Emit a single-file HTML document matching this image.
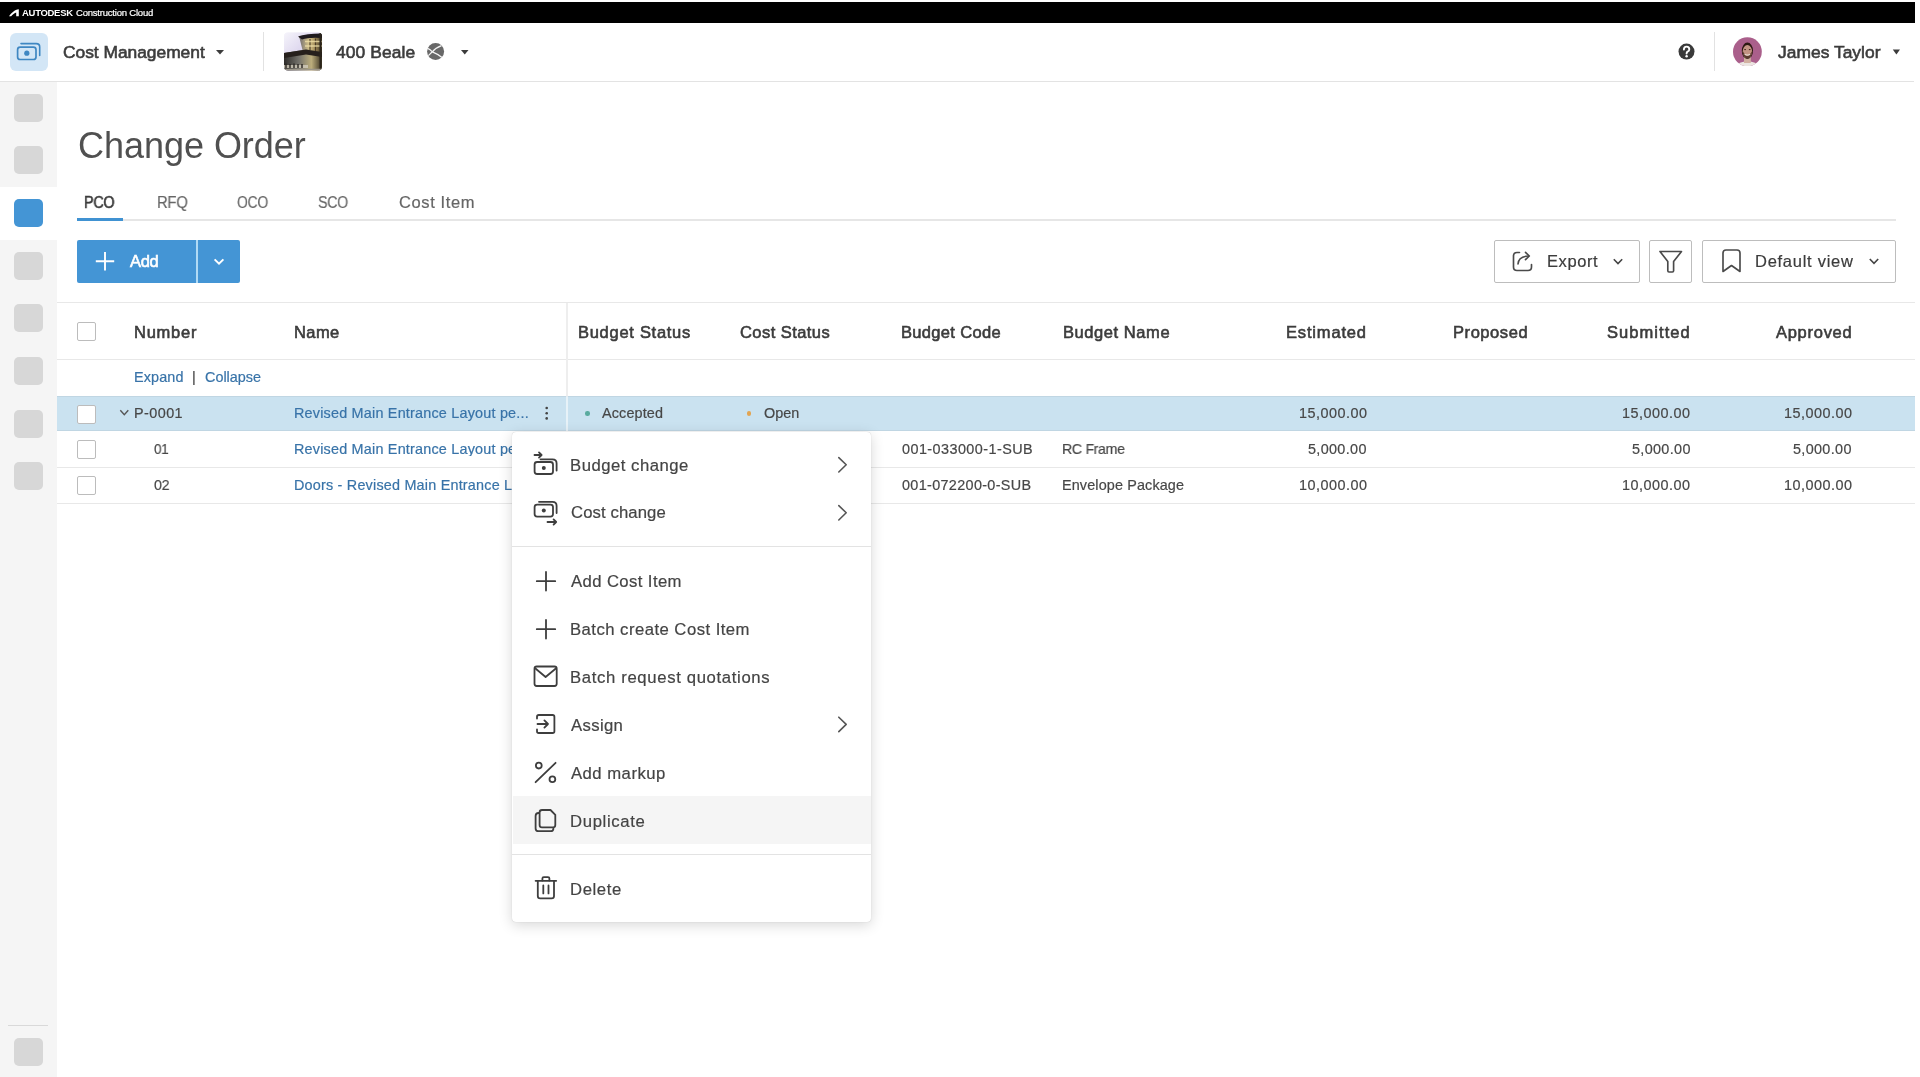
<!DOCTYPE html>
<html><head><meta charset="utf-8">
<style>
*{box-sizing:border-box;margin:0;padding:0}
html,body{width:1920px;height:1077px;overflow:hidden;background:#fff;font-family:"Liberation Sans",sans-serif;color:#3c3c3c}
.abs{position:absolute}
.t{position:absolute;white-space:nowrap;line-height:1;will-change:transform}
.sq{position:absolute;left:14px;width:29px;height:28px;border-radius:5px;background:#d7d7d7}
.btn{border:1.5px solid #bdbdbd;border-radius:2px;background:#fff}
.cb{width:19px;height:19px;border:1.5px solid #bcbcbc;border-radius:2px;background:#fff}
</style></head>
<body>

<div class="abs" style="left:0;top:2px;width:1915px;height:21px;background:#000"></div>
<svg class="abs" style="left:8px;top:8px" width="12" height="9" viewBox="0 0 12 9"><path d="M1 8.2 C3.5 5 6.5 1.6 10.8 1.2 L10.8 8.2 L8.2 8.2 L8.2 4.6 C6 5.4 4.2 7 3.2 8.2 Z" fill="#fff"/></svg>

<!-- header -->
<div class="abs" style="left:0;top:81px;width:1914px;height:1px;background:#e3e3e3"></div>
<div class="abs" style="left:10px;top:33px;width:38px;height:38px;border-radius:6px;background:#d3e6f6"></div>
<svg class="abs" style="left:0;top:0" width="60" height="80" viewBox="0 0 60 80">
  <path d="M21 43.6 H36.3 Q39.7 43.6 39.7 47 V55.5" fill="none" stroke="#3f87c2" stroke-width="1.6" stroke-linecap="round"/>
  <rect x="17.6" y="47.1" width="18.4" height="12.4" rx="2.6" fill="none" stroke="#3f87c2" stroke-width="1.7"/>
  <circle cx="26.8" cy="53.2" r="2.6" fill="#3f87c2"/>
</svg>
<svg class="abs" style="left:210px;top:45px" width="20" height="14"><path d="M6 5 H14 L10 9.5 Z" fill="#3c3c3c"/></svg>
<div class="abs" style="left:263px;top:32px;width:1px;height:39px;background:#e2e2e2"></div>
<svg class="abs" style="left:284px;top:32px" width="39" height="39" viewBox="0 0 39 39">
  <defs>
    <clipPath id="thc"><rect x="0" y="0.5" width="38" height="38" rx="4"/></clipPath>
    <linearGradient id="sky" x1="0" y1="0" x2="1" y2="1"><stop offset="0" stop-color="#f6f5fb"/><stop offset="0.45" stop-color="#ddd6ee"/><stop offset="1" stop-color="#f3e8e2"/></linearGradient>
    <linearGradient id="upl" x1="0" y1="0" x2="1" y2="0"><stop offset="0" stop-color="#6e6a70"/><stop offset="0.45" stop-color="#d6c48a"/><stop offset="0.7" stop-color="#a08a58"/><stop offset="1" stop-color="#3a3020"/></linearGradient>
    <linearGradient id="lowl" x1="0" y1="0" x2="1" y2="0"><stop offset="0" stop-color="#2e2c2a"/><stop offset="0.4" stop-color="#75736c"/><stop offset="0.72" stop-color="#bcae7c"/><stop offset="1" stop-color="#3a3222"/></linearGradient>
  </defs>
  <g clip-path="url(#thc)">
    <rect x="0" y="0" width="39" height="39" fill="#f6f4fa"/>
    <path d="M0 0 H39 V39 H0 Z" fill="url(#sky)"/>
    <path d="M15 4 L38 1.5 V24 H20 Z" fill="url(#upl)"/>
    <path d="M14 4.5 Q22 1.5 38 1.5 V6 Q25 5 18 7.5 Z" fill="#1f1a1e"/>
    <path d="M26 7 V23 M31.5 6.5 V23" stroke="#4a3c28" stroke-width="1.2"/>
    <path d="M21 9.5 H38 M21 14 H38" stroke="#f0e0a8" stroke-width="1.3" opacity="0.8"/>
    <path d="M0 21 L22 17.5 L38 20 V39 H0 Z" fill="url(#lowl)"/>
    <path d="M0 21 L22 17.5 L38 20 V25 L22 22.5 L0 26 Z" fill="#26201c"/>
    <path d="M0 33 H24 V36 H0 Z" fill="#cfc9b8" opacity="0.85"/>
    <path d="M2 31.5 V36 M6 32 V36 M10 31.5 V36 M14 32 V36 M18 32 V36" stroke="#2a2622" stroke-width="1.4"/>
    <path d="M36.5 1 V39" stroke="#2a241a" stroke-width="2"/>
    <path d="M0 37.5 H39" stroke="#9d978a" stroke-width="1.5"/>
  </g>
</svg>
<svg class="abs" style="left:425px;top:41px" width="22" height="22" viewBox="0 0 22 22">
  <circle cx="10.6" cy="10.6" r="8.5" fill="#686868"/>
  <path d="M2.2 7.2 Q5.5 8.6 7.3 10.8 M7.3 10.8 Q10.5 6.8 16.5 4.6 M7.3 10.8 Q12 12.6 17 16.4 M7.3 10.8 L3.4 14.6" fill="none" stroke="#f4f4f4" stroke-width="1.3"/>
</svg>
<svg class="abs" style="left:455px;top:45px" width="20" height="14"><path d="M6 5 H13.5 L9.75 9.5 Z" fill="#3c3c3c"/></svg>

<svg class="abs" style="left:1676px;top:41px" width="22" height="22" viewBox="0 0 22 22">
  <circle cx="10.5" cy="10.6" r="8" fill="#3a3a3a"/>
  <path d="M7.9 8.6 Q7.9 5.6 10.6 5.6 Q13.3 5.6 13.3 8.3 Q13.3 9.9 11.6 10.7 Q10.6 11.2 10.6 12.6" fill="none" stroke="#fff" stroke-width="1.9" stroke-linecap="round"/>
  <circle cx="10.6" cy="15.3" r="1.25" fill="#fff"/>
</svg>
<div class="abs" style="left:1714px;top:32px;width:1px;height:39px;background:#e2e2e2"></div>
<svg class="abs" style="left:1731px;top:36px" width="32" height="32" viewBox="0 0 32 32">
  <defs><clipPath id="avc"><circle cx="16.4" cy="15.7" r="14.4"/></clipPath></defs>
  <g clip-path="url(#avc)">
    <rect width="32" height="32" fill="#aa5f8b"/>
    <path d="M3 32 Q6 25.5 16.4 25.5 Q27 25.5 30 32 Z" fill="#ece6e2"/>
    <rect x="13" y="19" width="6.8" height="8" fill="#d2b2a2"/>
    <ellipse cx="16.4" cy="14.8" rx="5.6" ry="8.2" fill="#2c1812"/>
    <ellipse cx="16.4" cy="15.6" rx="4.7" ry="6.6" fill="#c39484"/>
    <path d="M11.8 15 Q16.4 24.5 21 15 Q21.2 21.8 16.4 22.4 Q11.6 21.8 11.8 15 Z" fill="#5a3a2e"/>
    <path d="M13.6 18.2 Q16.4 20 19.2 18.2" fill="none" stroke="#e8d8d0" stroke-width="1.1"/>
    <path d="M13.3 13.6 H14.9 M17.9 13.6 H19.5" stroke="#3a2018" stroke-width="1"/>
  </g>
</svg>
<svg class="abs" style="left:1886px;top:45px" width="20" height="14"><path d="M6.8 4.6 H14 L10.4 9.4 Z" fill="#3c3c3c"/></svg>

<!-- sidebar -->
<div class="abs" style="left:0;top:82px;width:57px;height:995px;background:#f5f5f5"></div>
<div class="abs" style="left:0;top:187px;width:57px;height:53px;background:#fff"></div>
<div class="sq" style="top:94px"></div>
<div class="sq" style="top:146px"></div>
<div class="sq" style="top:199px;background:#4495d5"></div>
<div class="sq" style="top:252px"></div>
<div class="sq" style="top:304px"></div>
<div class="sq" style="top:357px"></div>
<div class="sq" style="top:410px"></div>
<div class="sq" style="top:462px"></div>
<div class="abs" style="left:8px;top:1025px;width:40px;height:1px;background:#d9d9d9"></div>
<div class="sq" style="top:1038px"></div>

<!-- tabs -->
<div class="abs" style="left:77px;top:219px;width:1819px;height:2px;background:#e6e6e6"></div>
<div class="abs" style="left:77px;top:218px;width:46px;height:3px;background:#4092d2"></div>

<!-- add button -->
<div class="abs" style="left:77px;top:240px;width:163px;height:43px;border-radius:2px;background:#4495d5"></div>
<div class="abs" style="left:196px;top:240px;width:2px;height:43px;background:#b0daf5"></div>
<svg class="abs" style="left:90px;top:246px" width="30" height="30" viewBox="0 0 30 30"><path d="M15 6 V24.5 M5.8 15.3 H24.2" stroke="#fff" stroke-width="1.9"/></svg>
<svg class="abs" style="left:209px;top:252px" width="20" height="20" viewBox="0 0 20 20"><path d="M5.6 7.4 L10 11.6 L14.4 7.4" fill="none" stroke="#fff" stroke-width="2"/></svg>

<!-- right buttons -->
<div class="abs btn" style="left:1494px;top:240px;width:146px;height:43px"></div>
<svg class="abs" style="left:1510px;top:248px" width="26" height="26" viewBox="0 0 26 26">
  <path d="M9.5 4.5 H7 Q3.5 4.5 3.5 8 V19 Q3.5 22.5 7 22.5 H18 Q21.5 22.5 21.5 19 V16.5" fill="none" stroke="#4a4a4a" stroke-width="1.65" stroke-linecap="round"/>
  <path d="M8 16 Q8.5 8.5 18.5 8" fill="none" stroke="#4a4a4a" stroke-width="1.65" stroke-linecap="round"/>
  <path d="M15.5 4.3 L19.3 8 L15.5 11.7" fill="none" stroke="#4a4a4a" stroke-width="1.65" stroke-linecap="round" stroke-linejoin="round"/>
</svg>
<svg class="abs" style="left:1608px;top:252px" width="20" height="20" viewBox="0 0 20 20"><path d="M5.8 7.2 L10 11.5 L14.2 7.2" fill="none" stroke="#444" stroke-width="1.6"/></svg>
<div class="abs btn" style="left:1649px;top:240px;width:43px;height:43px"></div>
<svg class="abs" style="left:1657px;top:249px" width="28" height="26" viewBox="0 0 28 26">
  <path d="M3 2.5 H24.5 L16.6 12.5 V21.8 Q16.6 23 15.4 23 H12 Q10.8 23 10.8 21.8 V12.5 Z" fill="none" stroke="#4a4a4a" stroke-width="1.65" stroke-linejoin="round"/>
</svg>
<div class="abs btn" style="left:1702px;top:240px;width:194px;height:43px"></div>
<svg class="abs" style="left:1718px;top:247px" width="26" height="28" viewBox="0 0 26 28">
  <path d="M5 24.5 V6 Q5 3 8 3 H19 Q22 3 22 6 V24.5 L13.5 18.5 Z" fill="none" stroke="#4a4a4a" stroke-width="1.65" stroke-linejoin="round"/>
</svg>
<svg class="abs" style="left:1864px;top:252px" width="20" height="20" viewBox="0 0 20 20"><path d="M5.8 7 L10 11.3 L14.2 7" fill="none" stroke="#444" stroke-width="1.6"/></svg>

<!-- table -->
<div class="abs" style="left:57px;top:302px;width:1858px;height:1px;background:#e8e8e8"></div>
<div class="abs" style="left:57px;top:359px;width:1858px;height:1px;background:#e8e8e8"></div>
<div class="abs" style="left:57px;top:396px;width:1858px;height:35px;background:#cae2f0;border-top:1px solid #c0d6e3;border-bottom:1px solid #c0d6e3"></div>
<div class="abs" style="left:57px;top:467px;width:1858px;height:1px;background:#e8e8e8"></div>
<div class="abs" style="left:57px;top:503px;width:1858px;height:1px;background:#e8e8e8"></div>
<div class="abs" style="left:566px;top:303px;width:2px;height:93px;background:#eeeeee"></div>
<div class="abs" style="left:566px;top:396px;width:2px;height:36px;background:rgba(255,255,255,0.55)"></div>
<div class="abs" style="left:566px;top:432px;width:2px;height:71px;background:#eeeeee"></div>
<div class="abs cb" style="left:77px;top:322px"></div>
<div class="abs cb" style="left:77px;top:405px"></div>
<div class="abs cb" style="left:77px;top:440px"></div>
<div class="abs cb" style="left:77px;top:476px"></div>
<svg class="abs" style="left:116px;top:405px" width="16" height="16" viewBox="0 0 16 16"><path d="M4.3 5.2 L8.3 9.6 L12.3 5.2" fill="none" stroke="#555" stroke-width="1.4"/></svg>
<svg class="abs" style="left:540px;top:403px" width="14" height="20" viewBox="0 0 14 20">
  <circle cx="6.7" cy="5" r="1.3" fill="#444"/><circle cx="6.7" cy="10.2" r="1.3" fill="#444"/><circle cx="6.7" cy="15.4" r="1.3" fill="#444"/>
</svg>
<div class="abs" style="left:585.3px;top:411px;width:4.5px;height:4.5px;border-radius:50%;background:#5aab9f"></div>
<div class="abs" style="left:746.8px;top:411px;width:4.5px;height:4.5px;border-radius:50%;background:#e2a452"></div>

<div class="t" id="t0" style="left:21.50px;top:8.00px;font-size:9.5px;font-weight:bold;color:#fff;letter-spacing:-0.296px;">AUTODESK</div>
<div class="t" id="t1" style="left:76.40px;top:8.00px;font-size:9.5px;font-weight:normal;color:#fff;letter-spacing:-0.206px;-webkit-text-stroke:0.2px currentColor;">Construction Cloud</div>
<div class="t" id="t2" style="left:62.50px;top:44.00px;font-size:17.4px;font-weight:normal;color:#3c3c3c;letter-spacing:-0.026px;-webkit-text-stroke:0.6px currentColor;">Cost Management</div>
<div class="t" id="t3" style="left:336.40px;top:44.00px;font-size:17.4px;font-weight:normal;color:#3c3c3c;letter-spacing:0.118px;-webkit-text-stroke:0.6px currentColor;">400 Beale</div>
<div class="t" id="t4" style="left:1777.80px;top:44.00px;font-size:17.4px;font-weight:normal;color:#3c3c3c;letter-spacing:0.032px;-webkit-text-stroke:0.6px currentColor;">James Taylor</div>
<div class="t" id="t5" style="left:78.00px;top:128.00px;font-size:36px;font-weight:normal;color:#505050;letter-spacing:-0.031px;">Change Order</div>
<div class="t" id="t6" style="left:84.00px;top:194.00px;font-size:16.5px;font-weight:normal;color:#3c3c3c;letter-spacing:-0.300px;-webkit-text-stroke:0.6px currentColor;transform:scaleX(0.8712);transform-origin:0 0;">PCO</div>
<div class="t" id="t7" style="left:157.00px;top:194.00px;font-size:16.5px;font-weight:normal;color:#666;letter-spacing:-0.300px;-webkit-text-stroke:0.2px currentColor;transform:scaleX(0.8983);transform-origin:0 0;">RFQ</div>
<div class="t" id="t8" style="left:236.70px;top:194.00px;font-size:16.5px;font-weight:normal;color:#666;letter-spacing:-0.300px;-webkit-text-stroke:0.2px currentColor;transform:scaleX(0.8425);transform-origin:0 0;">OCO</div>
<div class="t" id="t9" style="left:318.00px;top:194.00px;font-size:16.5px;font-weight:normal;color:#666;letter-spacing:-0.300px;-webkit-text-stroke:0.2px currentColor;transform:scaleX(0.8607);transform-origin:0 0;">SCO</div>
<div class="t" id="t10" style="left:398.75px;top:194.00px;font-size:16.5px;font-weight:normal;color:#666;letter-spacing:0.606px;-webkit-text-stroke:0.2px currentColor;">Cost Item</div>
<div class="t" id="t11" style="left:129.60px;top:253.00px;font-size:16.5px;font-weight:normal;color:#fff;letter-spacing:-0.291px;-webkit-text-stroke:0.6px currentColor;">Add</div>
<div class="t" id="t12" style="left:1546.50px;top:253.00px;font-size:16.5px;font-weight:normal;color:#3c3c3c;letter-spacing:0.579px;-webkit-text-stroke:0.2px currentColor;">Export</div>
<div class="t" id="t13" style="left:1755.00px;top:253.00px;font-size:16.5px;font-weight:normal;color:#3c3c3c;letter-spacing:0.731px;-webkit-text-stroke:0.2px currentColor;">Default view</div>
<div class="t" id="t14" style="left:134.00px;top:324.00px;font-size:16.5px;font-weight:normal;color:#3c3c3c;letter-spacing:0.742px;-webkit-text-stroke:0.6px currentColor;">Number</div>
<div class="t" id="t15" style="left:294.00px;top:324.00px;font-size:16.5px;font-weight:normal;color:#3c3c3c;letter-spacing:0.421px;-webkit-text-stroke:0.6px currentColor;">Name</div>
<div class="t" id="t16" style="left:578.00px;top:324.00px;font-size:16.5px;font-weight:normal;color:#3c3c3c;letter-spacing:0.716px;-webkit-text-stroke:0.6px currentColor;">Budget Status</div>
<div class="t" id="t17" style="left:739.80px;top:324.00px;font-size:16.5px;font-weight:normal;color:#3c3c3c;letter-spacing:0.436px;-webkit-text-stroke:0.6px currentColor;">Cost Status</div>
<div class="t" id="t18" style="left:901.00px;top:324.00px;font-size:16.5px;font-weight:normal;color:#3c3c3c;letter-spacing:0.325px;-webkit-text-stroke:0.6px currentColor;">Budget Code</div>
<div class="t" id="t19" style="left:1063.00px;top:324.00px;font-size:16.5px;font-weight:normal;color:#3c3c3c;letter-spacing:0.568px;-webkit-text-stroke:0.6px currentColor;">Budget Name</div>
<div class="t" id="t20" style="left:1286.00px;top:324.00px;font-size:16.5px;font-weight:normal;color:#3c3c3c;letter-spacing:0.827px;-webkit-text-stroke:0.6px currentColor;">Estimated</div>
<div class="t" id="t21" style="left:1453.00px;top:324.00px;font-size:16.5px;font-weight:normal;color:#3c3c3c;letter-spacing:0.563px;-webkit-text-stroke:0.6px currentColor;">Proposed</div>
<div class="t" id="t22" style="left:1606.60px;top:324.00px;font-size:16.5px;font-weight:normal;color:#3c3c3c;letter-spacing:1.061px;-webkit-text-stroke:0.6px currentColor;">Submitted</div>
<div class="t" id="t23" style="left:1775.50px;top:324.00px;font-size:16.5px;font-weight:normal;color:#3c3c3c;letter-spacing:0.721px;-webkit-text-stroke:0.6px currentColor;">Approved</div>
<div class="t" id="t24" style="left:134.00px;top:370.00px;font-size:14.4px;font-weight:normal;color:#3873a8;letter-spacing:0.119px;-webkit-text-stroke:0.2px currentColor;">Expand</div>
<div class="t" id="t25" style="left:192.30px;top:370.00px;font-size:14.4px;font-weight:normal;color:#474747;letter-spacing:0.000px;-webkit-text-stroke:0.2px currentColor;">|</div>
<div class="t" id="t26" style="left:205.00px;top:370.00px;font-size:14.4px;font-weight:normal;color:#3873a8;letter-spacing:0.001px;-webkit-text-stroke:0.2px currentColor;">Collapse</div>
<div class="t" id="t27" style="left:134.00px;top:406.00px;font-size:14.4px;font-weight:normal;color:#474747;letter-spacing:0.440px;-webkit-text-stroke:0.2px currentColor;">P-0001</div>
<div class="t" id="t28" style="left:294.30px;top:406.00px;font-size:14.4px;font-weight:normal;color:#3873a8;letter-spacing:0.204px;-webkit-text-stroke:0.2px currentColor;">Revised Main Entrance Layout pe...</div>
<div class="t" id="t29" style="left:602.00px;top:406.00px;font-size:14.4px;font-weight:normal;color:#474747;letter-spacing:0.143px;-webkit-text-stroke:0.2px currentColor;">Accepted</div>
<div class="t" id="t30" style="left:763.50px;top:406.00px;font-size:14.4px;font-weight:normal;color:#474747;letter-spacing:0.033px;-webkit-text-stroke:0.2px currentColor;">Open</div>
<div class="t" id="t31" style="left:1298.50px;top:406.00px;font-size:14.4px;font-weight:normal;color:#474747;letter-spacing:0.498px;-webkit-text-stroke:0.2px currentColor;">15,000.00</div>
<div class="t" id="t32" style="left:1622.00px;top:406.00px;font-size:14.4px;font-weight:normal;color:#474747;letter-spacing:0.498px;-webkit-text-stroke:0.2px currentColor;">15,000.00</div>
<div class="t" id="t33" style="left:1783.60px;top:406.00px;font-size:14.4px;font-weight:normal;color:#474747;letter-spacing:0.498px;-webkit-text-stroke:0.2px currentColor;">15,000.00</div>
<div class="t" id="t34" style="left:153.60px;top:442.00px;font-size:14.4px;font-weight:normal;color:#474747;letter-spacing:-0.300px;-webkit-text-stroke:0.2px currentColor;transform:scaleX(0.9297);transform-origin:0 0;">01</div>
<div class="t" id="t35" style="left:294.30px;top:442.00px;font-size:14.4px;font-weight:normal;color:#3873a8;letter-spacing:0.204px;-webkit-text-stroke:0.2px currentColor;overflow:hidden;width:218.2px;">Revised Main Entrance Layout pe</div>
<div class="t" id="t36" style="left:901.70px;top:442.00px;font-size:14.4px;font-weight:normal;color:#474747;letter-spacing:0.440px;-webkit-text-stroke:0.2px currentColor;">001-033000-1-SUB</div>
<div class="t" id="t37" style="left:1062.30px;top:442.00px;font-size:14.4px;font-weight:normal;color:#474747;letter-spacing:-0.300px;-webkit-text-stroke:0.2px currentColor;transform:scaleX(0.9801);transform-origin:0 0;">RC Frame</div>
<div class="t" id="t38" style="left:1308.00px;top:442.00px;font-size:14.4px;font-weight:normal;color:#474747;letter-spacing:0.341px;-webkit-text-stroke:0.2px currentColor;">5,000.00</div>
<div class="t" id="t39" style="left:1631.60px;top:442.00px;font-size:14.4px;font-weight:normal;color:#474747;letter-spacing:0.341px;-webkit-text-stroke:0.2px currentColor;">5,000.00</div>
<div class="t" id="t40" style="left:1793.20px;top:442.00px;font-size:14.4px;font-weight:normal;color:#474747;letter-spacing:0.341px;-webkit-text-stroke:0.2px currentColor;">5,000.00</div>
<div class="t" id="t41" style="left:153.60px;top:478.00px;font-size:14.4px;font-weight:normal;color:#474747;letter-spacing:-0.300px;-webkit-text-stroke:0.2px currentColor;transform:scaleX(0.9870);transform-origin:0 0;">02</div>
<div class="t" id="t42" style="left:294.30px;top:478.00px;font-size:14.4px;font-weight:normal;color:#3873a8;letter-spacing:0.204px;-webkit-text-stroke:0.2px currentColor;overflow:hidden;width:218.2px;">Doors - Revised Main Entrance L</div>
<div class="t" id="t43" style="left:901.70px;top:478.00px;font-size:14.4px;font-weight:normal;color:#474747;letter-spacing:0.340px;-webkit-text-stroke:0.2px currentColor;">001-072200-0-SUB</div>
<div class="t" id="t44" style="left:1062.30px;top:478.00px;font-size:14.4px;font-weight:normal;color:#474747;letter-spacing:0.133px;-webkit-text-stroke:0.2px currentColor;">Envelope Package</div>
<div class="t" id="t45" style="left:1298.50px;top:478.00px;font-size:14.4px;font-weight:normal;color:#474747;letter-spacing:0.498px;-webkit-text-stroke:0.2px currentColor;">10,000.00</div>
<div class="t" id="t46" style="left:1622.00px;top:478.00px;font-size:14.4px;font-weight:normal;color:#474747;letter-spacing:0.498px;-webkit-text-stroke:0.2px currentColor;">10,000.00</div>
<div class="t" id="t47" style="left:1783.60px;top:478.00px;font-size:14.4px;font-weight:normal;color:#474747;letter-spacing:0.498px;-webkit-text-stroke:0.2px currentColor;">10,000.00</div>
<div class="abs" style="left:512px;top:432px;width:359px;height:490px;background:#fff;border-radius:4px;box-shadow:0 0 1px rgba(0,0,0,.25),0 3px 14px rgba(0,0,0,.16)">
</div>
<div class="abs" style="left:512px;top:546px;width:359px;height:1px;background:#e3e3e3"></div>
<div class="abs" style="left:513px;top:796px;width:358px;height:48px;background:#f5f5f5"></div>
<div class="abs" style="left:512px;top:854px;width:359px;height:1px;background:#e3e3e3"></div>
<svg class="abs" style="left:512px;top:432px" width="359" height="490" viewBox="512 432 359 490">
 <g fill="none" stroke="#3e3e3e" stroke-width="1.8" stroke-linecap="round" stroke-linejoin="round">
  <!-- budget change -->
  <path d="M534.5 455 H541.5 M539 452.4 L541.6 455 L539 457.6"/>
  <path d="M540.5 459.3 H552.5 Q556.6 459.3 556.6 463.4 V470.5"/>
  <rect x="534.6" y="462" width="18.4" height="12" rx="2.5"/>
  <circle cx="543.8" cy="468" r="2" fill="#3e3e3e" stroke="none"/>
  <!-- cost change -->
  <path d="M539 501.8 H552.5 Q556.6 501.8 556.6 505.9 V513"/>
  <rect x="534.6" y="504.6" width="18.4" height="12" rx="2.5"/>
  <circle cx="543.8" cy="510.6" r="2" fill="#3e3e3e" stroke="none"/>
  <path d="M547.5 522 H556.2 M553.6 519.4 L556.2 522 L553.6 524.6"/>
  <!-- plus -->
  <path d="M546 572 V590.5 M536.8 581.2 H555.2"/>
  <path d="M546 620 V638.5 M536.8 629.2 H555.2"/>
  <!-- envelope -->
  <rect x="534.5" y="666.5" width="22.2" height="19.5" rx="2.2"/>
  <path d="M535.5 668.5 L545.6 677 L555.8 668.5"/>
  <!-- assign -->
  <path d="M537 718.5 V716.8 Q537 715 538.8 715 H552.6 Q554.4 715 554.4 716.8 V731.2 Q554.4 733 552.6 733 H538.8 Q537 733 537 731.2 V729.5"/>
  <path d="M537.5 724 H548 M544.4 720.4 L548 724 L544.4 727.6"/>
  <!-- percent -->
  <path d="M535.6 782.2 L555.6 762.8"/>
  <circle cx="538.8" cy="765.6" r="2.9"/>
  <circle cx="552.4" cy="779.2" r="2.9"/>
  <!-- duplicate -->
  <path d="M538.6 813 Q535.6 813 535.6 816 V828.4 Q535.6 831.2 538.6 831.2 H550.6 Q553.4 831.2 553.4 828.4"/>
  <path d="M539.6 812.4 Q539.6 810 542 810 H550.5 L555.3 814.8 V825 Q555.3 827.4 552.9 827.4 H542 Q539.6 827.4 539.6 825 Z"/>
  <!-- delete -->
  <path d="M535.6 880.8 H556.2"/>
  <path d="M542.4 880.6 V878.6 Q542.4 877.2 543.8 877.2 H548 Q549.4 877.2 549.4 878.6 V880.6"/>
  <path d="M537.8 881 V896 Q537.8 898.4 540.2 898.4 H551.6 Q554 898.4 554 896 V881"/>
  <path d="M543.3 885.5 V893.4 M548.5 885.5 V893.4"/>
  <!-- chevrons -->
  <path d="M838.8 457.6 L846.2 464.8 L838.8 472" stroke="#555" stroke-width="1.6"/>
  <path d="M838.8 505.6 L846.2 512.8 L838.8 520" stroke="#555" stroke-width="1.6"/>
  <path d="M838.8 717.2 L846.2 724.4 L838.8 731.6" stroke="#555" stroke-width="1.6"/>
 </g>
</svg>
<div class="t" id="t48" style="left:569.50px;top:458.00px;font-size:16.7px;font-weight:normal;color:#444;letter-spacing:0.501px;-webkit-text-stroke:0.2px currentColor;">Budget change</div>
<div class="t" id="t49" style="left:570.50px;top:505.00px;font-size:16.7px;font-weight:normal;color:#444;letter-spacing:0.108px;-webkit-text-stroke:0.2px currentColor;">Cost change</div>
<div class="t" id="t50" style="left:570.50px;top:574.00px;font-size:16.7px;font-weight:normal;color:#444;letter-spacing:0.397px;-webkit-text-stroke:0.2px currentColor;">Add Cost Item</div>
<div class="t" id="t51" style="left:569.50px;top:622.00px;font-size:16.7px;font-weight:normal;color:#444;letter-spacing:0.465px;-webkit-text-stroke:0.2px currentColor;">Batch create Cost Item</div>
<div class="t" id="t52" style="left:569.50px;top:670.00px;font-size:16.7px;font-weight:normal;color:#444;letter-spacing:0.653px;-webkit-text-stroke:0.2px currentColor;">Batch request quotations</div>
<div class="t" id="t53" style="left:570.50px;top:718.00px;font-size:16.7px;font-weight:normal;color:#444;letter-spacing:0.359px;-webkit-text-stroke:0.2px currentColor;">Assign</div>
<div class="t" id="t54" style="left:570.50px;top:766.00px;font-size:16.7px;font-weight:normal;color:#444;letter-spacing:0.479px;-webkit-text-stroke:0.2px currentColor;">Add markup</div>
<div class="t" id="t55" style="left:569.50px;top:814.00px;font-size:16.7px;font-weight:normal;color:#444;letter-spacing:0.664px;-webkit-text-stroke:0.2px currentColor;">Duplicate</div>
<div class="t" id="t56" style="left:569.50px;top:882.00px;font-size:16.7px;font-weight:normal;color:#444;letter-spacing:0.589px;-webkit-text-stroke:0.2px currentColor;">Delete</div>
</body></html>
